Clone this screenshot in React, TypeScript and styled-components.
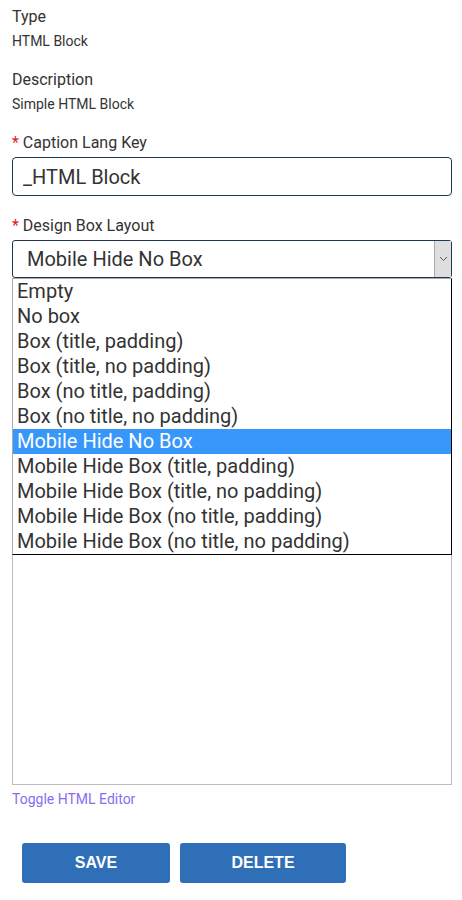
import styled, { createGlobalStyle } from "styled-components";

const options = [
  "Empty",
  "No box",
  "Box (title, padding)",
  "Box (title, no padding)",
  "Box (no title, padding)",
  "Box (no title, no padding)",
  "Mobile Hide No Box",
  "Mobile Hide Box (title, padding)",
  "Mobile Hide Box (title, no padding)",
  "Mobile Hide Box (no title, padding)",
  "Mobile Hide Box (no title, no padding)",
];

const selected = "Mobile Hide No Box";

const App = () => {
  return (
    <StyledPage>
      <GlobalStyle />
      <StyledInfo>
        <StyledLabel>Type</StyledLabel>
        <StyledValue>HTML Block</StyledValue>
      </StyledInfo>
      <StyledInfo>
        <StyledLabel>Description</StyledLabel>
        <StyledValue>Simple HTML Block</StyledValue>
      </StyledInfo>

      <StyledField>
        <StyledLabel>
          <StyledStar>*</StyledStar> Caption Lang Key
        </StyledLabel>
        <StyledInput defaultValue="_HTML Block" />
      </StyledField>

      <StyledField>
        <StyledLabel>
          <StyledStar>*</StyledStar> Design Box Layout
        </StyledLabel>
        <StyledSelectWrap>
          <StyledSelect>
            <StyledSelectText>{selected}</StyledSelectText>
            <StyledArrow>
              <svg width="9" height="6" viewBox="0 0 9 6">
                <path d="M1 1l3.5 3.5L8 1" fill="none" stroke="#555" strokeWidth="1" />
              </svg>
            </StyledArrow>
          </StyledSelect>
          <StyledList>
            {options.map((o) => (
              <StyledOption key={o} $active={o === selected}>
                {o}
              </StyledOption>
            ))}
          </StyledList>
        </StyledSelectWrap>
        <StyledEditor />
        <StyledLink href="#">Toggle HTML Editor</StyledLink>
      </StyledField>

      <StyledButtons>
        <StyledButton $width={148}>SAVE</StyledButton>
        <StyledButton $width={166}>DELETE</StyledButton>
      </StyledButtons>
    </StyledPage>
  );
};

export default App;

const GlobalStyle = createGlobalStyle`
  body {
    margin: 0;
    background: #fff;
    font-family: Roboto, "Liberation Sans", sans-serif;
    color: #333;
  }
`;

const StyledPage = styled.div`
  width: 462px;
  padding: 7px 10px 0 12px;
  box-sizing: border-box;
`;

const StyledInfo = styled.div`
  display: flex;
  flex-direction: column;
  gap: 4px;
  margin-bottom: 19px;
`;

const StyledLabel = styled.div`
  font-size: 16px;
  line-height: 20px;
  color: #333;
`;

const StyledValue = styled.div`
  font-size: 14px;
  line-height: 20px;
  color: #333;
`;

const StyledStar = styled.span`
  color: #e0201b;
`;

const StyledField = styled.div`
  display: flex;
  flex-direction: column;
  gap: 4px;
  margin-bottom: 20px;
`;

const StyledInput = styled.input`
  box-sizing: border-box;
  width: 440px;
  height: 39px;
  border: 1px solid #1f3552;
  border-radius: 4px;
  padding: 0 10px;
  font-family: Roboto, "Liberation Sans", sans-serif;
  font-size: 20px;
  color: #333;
  outline: none;
`;

const StyledSelectWrap = styled.div`
  position: relative;
  width: 440px;
`;

const StyledSelect = styled.div`
  box-sizing: border-box;
  height: 38px;
  border: 1px solid #1f3552;
  border-radius: 3px;
  display: flex;
  align-items: stretch;
`;

const StyledSelectText = styled.div`
  flex: 1;
  display: flex;
  align-items: center;
  padding-left: 14px;
  font-size: 20px;
  color: #333;
`;

const StyledArrow = styled.div`
  width: 16px;
  background: #dedede;
  border-left: 1px solid #aaa;
  display: flex;
  align-items: center;
  justify-content: center;
`;

const StyledList = styled.div`
  position: absolute;
  top: 38px;
  left: 0;
  width: 440px;
  box-sizing: border-box;
  background: #fff;
  border: 1px solid #000;
  border-left-color: #aaa;
  border-top-color: #aaa;
  z-index: 2;
`;

const StyledOption = styled.div<{ $active?: boolean }>`
  height: 25px;
  line-height: 25px;
  padding-left: 4px;
  font-size: 20px;
  white-space: nowrap;
  color: ${(p) => (p.$active ? "#fff" : "#333")};
  background: ${(p) => (p.$active ? "#3797fb" : "transparent")};
`;

const StyledEditor = styled.div`
  box-sizing: border-box;
  width: 440px;
  height: 495px;
  margin-top: 8px;
  border: 1px solid #bdbdbd;
`;

const StyledLink = styled.a`
  font-size: 14px;
  line-height: 20px;
  color: #8a6cf3;
  text-decoration: none;
`;

const StyledButtons = styled.div`
  display: flex;
  gap: 10px;
  padding: 14px 0 0 10px;
`;

const StyledButton = styled.button<{ $width: number }>`
  width: ${(p) => p.$width}px;
  height: 40px;
  border: none;
  border-radius: 3px;
  background: #2f6fb8;
  color: #fff;
  font-family: "Liberation Sans", Arial, sans-serif;
  font-weight: bold;
  font-size: 16px;
  cursor: pointer;
`;
